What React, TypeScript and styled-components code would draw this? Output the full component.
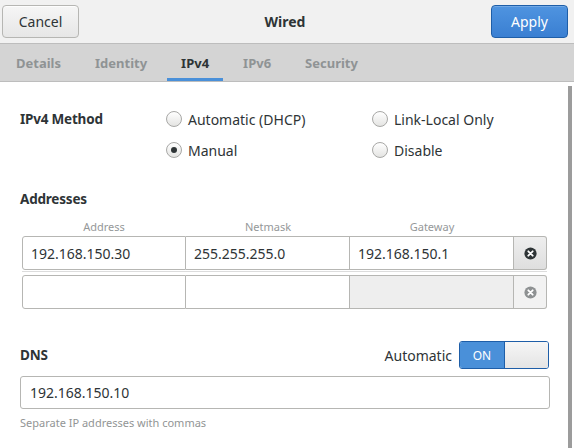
import React from "react";
import styled, { createGlobalStyle } from "styled-components";

const Global = createGlobalStyle`
  html, body { margin: 0; padding: 0; background: #ffffff; }
  body { font-family: "Noto Sans", "DejaVu Sans", sans-serif; color: #2e3436; }
`;

const Window = styled.div`
  position: relative;
  width: 574px;
  height: 448px;
  overflow: hidden;
  background: #ffffff;
  font-size: 14px;
`;

const HeaderBar = styled.div`
  height: 43px;
  display: grid;
  grid-template-columns: 1fr auto 1fr;
  align-items: center;
  padding: 0 6px 0 2px;
  background: #f1f1f1;
  border-bottom: 1px solid #bdbdbd;
`;

const Button = styled.button<{ $primary?: boolean; $align: "start" | "end" }>`
  justify-self: ${(p) => p.$align};
  width: 77px;
  height: 33px;
  border-radius: 4px;
  font-family: inherit;
  font-size: 14px;
  padding: 0;
  border: 1px solid ${(p) => (p.$primary ? "#1e5ea8" : "#b6b6b3")};
  color: ${(p) => (p.$primary ? "#ffffff" : "#2e3436")};
  background: ${(p) =>
    p.$primary
      ? "linear-gradient(#4f94e0, #3a7fd2)"
      : "linear-gradient(#f6f6f6, #e6e6e6)"};
  box-shadow: inset 0 1px rgba(255, 255, 255, ${(p) => (p.$primary ? 0.2 : 0.8)});
`;

const Title = styled.div`
  font-weight: 700;
  font-size: 14px;
`;

const TabBar = styled.div`
  height: 37px;
  display: flex;
  align-items: stretch;
  gap: 6px;
  padding-left: 2px;
  background: #d4d4d4;
  border-bottom: 1px solid #bdbdbd;
`;

const Tab = styled.div<{ $active?: boolean }>`
  display: flex;
  align-items: center;
  padding: 0 14px;
  font-weight: 700;
  font-size: 13px;
  color: ${(p) => (p.$active ? "#2e3436" : "#8f9394")};
  box-shadow: ${(p) => (p.$active ? "inset 0 -3px #4a90d9" : "none")};
`;

const Content = styled.div`
  padding: 0 24px 0 20px;
`;

const MethodGrid = styled.div`
  display: grid;
  grid-template-columns: 146px 206px 1fr;
  grid-auto-rows: 22px;
  row-gap: 9px;
  align-items: center;
  margin-top: 26px;
`;

const Heading = styled.div`
  font-weight: 700;
  font-size: 13.5px;
  letter-spacing: -0.2px;
`;

const RadioLabel = styled.label`
  display: flex;
  align-items: center;
  gap: 6px;
`;

const RadioCircle = styled.span<{ $checked?: boolean }>`
  position: relative;
  width: 14px;
  height: 14px;
  border-radius: 50%;
  border: 1px solid #a8a8a6;
  background: linear-gradient(#ffffff, #e4e4e2);
  &::after {
    content: "";
    display: ${(p) => (p.$checked ? "block" : "none")};
    position: absolute;
    left: 4px;
    top: 4px;
    width: 6px;
    height: 6px;
    border-radius: 50%;
    background: #2e3436;
  }
`;

const SectionHeading = styled(Heading)`
  margin-top: 28px;
  height: 20px;
  line-height: 20px;
`;

const Table = styled.div`
  width: 525px;
  margin-left: 2px;
`;

const ColHeaders = styled.div`
  display: grid;
  grid-template-columns: 164px 164px 164px 33px;
  margin-top: 9px;
  height: 17px;
  line-height: 17px;
  font-size: 11px;
  color: #959899;
  text-align: center;
`;

const Row = styled.div`
  display: grid;
  grid-template-columns: 164px 164px 164px 33px;
  height: 34px;
  margin-top: 1px;
`;

const Separator = styled.div`
  height: 1px;
  background: #dcdcdc;
  margin: 1px 0 3px;
`;

const Cell = styled.div<{ $first?: boolean; $dim?: boolean }>`
  display: flex;
  align-items: center;
  padding-left: 8px;
  border: 1px solid #b6b6b3;
  border-left-width: ${(p) => (p.$first ? "1px" : "0")};
  border-radius: ${(p) => (p.$first ? "3px 0 0 3px" : "0")};
  background: ${(p) => (p.$dim ? "#eeeeee" : "#ffffff")};
  font-size: 14px;
`;

const DeleteButton = styled.div<{ $dim?: boolean }>`
  display: flex;
  align-items: center;
  justify-content: center;
  border: 1px solid #b6b6b3;
  border-left-width: 0;
  border-radius: 0 3px 3px 0;
  background: ${(p) =>
    p.$dim ? "#f2f2f2" : "linear-gradient(#eeeeee, #dedede)"};
`;

const DnsRow = styled.div`
  display: flex;
  align-items: center;
  justify-content: space-between;
  margin-top: 32px;
  height: 28px;
`;

const AutoGroup = styled.div`
  display: flex;
  align-items: center;
  gap: 7px;
  margin-right: 1px;
`;

const Switch = styled.div`
  display: flex;
  width: 88px;
  height: 26px;
  border: 1px solid #1e5ea8;
  border-radius: 3px;
  overflow: hidden;
`;

const SwitchOn = styled.div`
  width: 44px;
  display: flex;
  align-items: center;
  justify-content: center;
  background: #4a90d9;
  color: #ffffff;
  font-size: 12px;
`;

const SwitchKnob = styled.div`
  flex: 1;
  background: linear-gradient(#f6f6f6, #e4e4e4);
  border-left: 1px solid #1e5ea8;
`;

const Entry = styled.div`
  margin-top: 7px;
  height: 31px;
  display: flex;
  align-items: center;
  padding-left: 9px;
  border: 1px solid #b6b6b3;
  border-radius: 3px;
  font-size: 14px;
`;

const Hint = styled.div`
  margin-top: 6px;
  height: 16px;
  line-height: 16px;
  font-size: 11px;
  color: #929595;
`;

const Scrollbar = styled.div`
  position: absolute;
  right: 2px;
  top: 86px;
  bottom: 0;
  width: 4px;
  background: #9c9c9c;
`;

const ClearIcon = ({ color }: { color: string }) => (
  <svg width="13" height="13" viewBox="0 0 16 16">
    <circle cx="8" cy="8" r="7.5" fill={color} />
    <path d="M5.3 5.3 L10.7 10.7 M10.7 5.3 L5.3 10.7" stroke="#ffffff" strokeWidth="2.2" strokeLinecap="round" />
  </svg>
);

const Radio = ({ label, checked }: { label: string; checked?: boolean }) => (
  <RadioLabel>
    <RadioCircle $checked={checked} />
    {label}
  </RadioLabel>
);

export default function App() {
  return (
    <Window>
      <Global />
      <HeaderBar>
        <Button $align="start">Cancel</Button>
        <Title>Wired</Title>
        <Button $align="end" $primary>Apply</Button>
      </HeaderBar>
      <TabBar>
        <Tab>Details</Tab>
        <Tab>Identity</Tab>
        <Tab $active>IPv4</Tab>
        <Tab>IPv6</Tab>
        <Tab>Security</Tab>
      </TabBar>
      <Content>
        <MethodGrid>
          <Heading>IPv4 Method</Heading>
          <Radio label="Automatic (DHCP)" />
          <Radio label="Link-Local Only" />
          <span />
          <Radio label="Manual" checked />
          <Radio label="Disable" />
        </MethodGrid>
        <SectionHeading>Addresses</SectionHeading>
        <Table>
          <ColHeaders>
            <span>Address</span>
            <span>Netmask</span>
            <span>Gateway</span>
            <span />
          </ColHeaders>
          <Row>
            <Cell $first>192.168.150.30</Cell>
            <Cell>255.255.255.0</Cell>
            <Cell>192.168.150.1</Cell>
            <DeleteButton>
              <ClearIcon color="#2e3436" />
            </DeleteButton>
          </Row>
          <Separator />
          <Row>
            <Cell $first />
            <Cell />
            <Cell $dim />
            <DeleteButton $dim>
              <ClearIcon color="#8e9192" />
            </DeleteButton>
          </Row>
        </Table>
        <DnsRow>
          <Heading>DNS</Heading>
          <AutoGroup>
            <span>Automatic</span>
            <Switch>
              <SwitchOn>ON</SwitchOn>
              <SwitchKnob />
            </Switch>
          </AutoGroup>
        </DnsRow>
        <Entry>192.168.150.10</Entry>
        <Hint>Separate IP addresses with commas</Hint>
      </Content>
      <Scrollbar />
    </Window>
  );
}
